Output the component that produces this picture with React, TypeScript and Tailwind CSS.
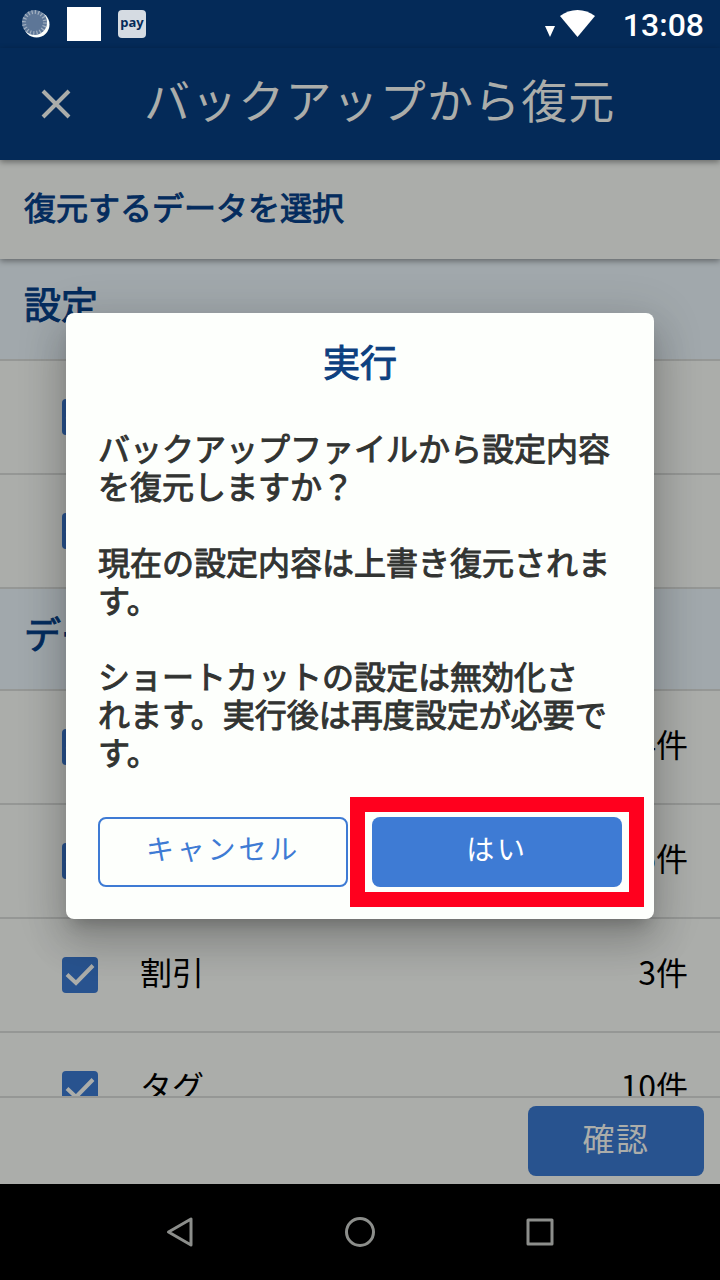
import { ReactNode } from 'react'

type Row = { name: string; label?: string; count?: string }

const settingRows: Row[] = [{ name: 'setting-1' }, { name: 'setting-2' }]

const dataRows: Row[] = [
	{ name: 'data-1', count: '4件' },
	{ name: 'data-2', count: '5件' },
	{ name: 'data-3', label: '割引', count: '3件' },
	{ name: 'data-4', label: 'タグ', count: '10件' },
]

const message = `バックアップファイルから設定内容
を復元しますか？

現在の設定内容は上書き復元されま
す。

ショートカットの設定は無効化さ
れます。実行後は再度設定が必要で
す。`

const StatusBar = () => (
	<div className="flex h-12 shrink-0 items-center bg-[#042a58] pl-5 pr-4">
		<svg width="32" height="32" viewBox="0 0 32 32" className="shrink-0">
			<circle cx="16.500" cy="16.500" r="13" fill="#fdfffc" />
			<circle cx="14.500" cy="14.500" r="12.500" fill="#5d7697" />
			<circle
				cx="14.500"
				cy="14.500"
				r="10.500"
				fill="none"
				stroke="#a3b1c1"
				strokeWidth="4"
				strokeDasharray="1.2 2.1"
			/>
		</svg>
		<div className="ml-[15px] size-[34px] bg-white" />
		<div className="ml-[17px] flex size-7 items-center justify-center rounded-sm bg-[#d5dbe2] pb-1 font-['Noto_Sans','Open_Sans',sans-serif] text-[13px] leading-5 font-bold text-[#042a58]">
			pay
		</div>
		<svg width="52" height="30" viewBox="0 0 52 30" className="ml-auto">
			<path d="M2 17h10l-5 11z" fill="#fff" />
			<path d="M17 7C27-1 42-1 52 7L34.500 28z" fill="#fff" />
		</svg>
		<span className="ml-7 pt-0.5 font-['Roboto',sans-serif] text-[32px] leading-12 font-medium text-white">
			13:08
		</span>
	</div>
)

const SectionTitle = ({ children }: { children: ReactNode }) => (
	<h2 className="flex h-[102px] items-center border-b-2 border-[#959795] bg-[#a1a8ac] px-6 pb-3 text-[37px] leading-12 text-[#042c5e] [-webkit-text-stroke:1px]">
		{children}
	</h2>
)

const CheckRow = ({ name, label, count }: Row) => (
	<label className="flex h-[114px] items-center border-b-2 border-[#959795] pl-[62px] pr-8 text-[32px] leading-12 text-black">
		<span className="relative size-9 shrink-0">
			<input
				type="checkbox"
				name={name}
				aria-label={label ?? name}
				defaultChecked
				className="block size-9 appearance-none rounded-sm bg-[#28538f]"
			/>
			<svg
				viewBox="0 0 36 36"
				className="pointer-events-none absolute inset-0 size-9"
			>
				<path
					d="M5 17.500L14 26L31 8.500"
					fill="none"
					stroke="#abadaa"
					strokeWidth="4"
				/>
			</svg>
		</span>
		<span className="ml-[42px] grow pb-2">{label}</span>
		<span className="pb-2">{count}</span>
	</label>
)

const Dialog = () => (
	<div
		role="dialog"
		aria-labelledby="dialog-title"
		className="w-full rounded-lg bg-[#fdfffc] px-8 pt-6 pb-8 shadow-[0_11px_15px_-7px_rgba(0,0,0,0.2),0_24px_38px_3px_rgba(0,0,0,0.14),0_9px_46px_8px_rgba(0,0,0,0.12)]"
	>
		<h2
			id="dialog-title"
			className="text-center text-[37px] leading-12 text-[#0d4080] [-webkit-text-stroke:1px]"
		>
			実行
		</h2>
		<p className="mt-[43px] text-[32px] leading-[38px] whitespace-pre text-[#323432] [-webkit-text-stroke:1px]">
			{message}
		</p>
		<div className="mt-[47px] grid grid-cols-2 gap-6">
			<button className="h-[70px] rounded-lg border-2 border-[#3e7bd4] pb-2 text-[28px] tracking-widest text-[#3e7bd4]">
				キャンセル
			</button>
			<div className="relative">
				<button className="h-[70px] w-full rounded-lg bg-[#3e7bd4] pb-2 text-[28px] tracking-widest text-white">
					はい
				</button>
				<div className="pointer-events-none absolute -inset-x-[22px] -inset-y-5 border-[15px] border-[#ff001e]" />
			</div>
		</div>
	</div>
)

const NavBar = () => (
	<nav className="flex h-24 shrink-0 items-center justify-center gap-[148px] bg-black">
		<button aria-label="戻る">
			<svg width="32" height="32" viewBox="0 0 32 32" className="block">
				<path
					d="M4.500 16L27 3v26z"
					fill="none"
					stroke="#8c8e8b"
					strokeWidth="3"
					strokeLinejoin="round"
				/>
			</svg>
		</button>
		<button aria-label="ホーム">
			<svg width="32" height="32" viewBox="0 0 32 32" className="block">
				<circle
					cx="16"
					cy="16"
					r="13.500"
					fill="none"
					stroke="#8c8e8b"
					strokeWidth="3"
				/>
			</svg>
		</button>
		<button aria-label="履歴">
			<svg width="32" height="32" viewBox="0 0 32 32" className="block">
				<rect
					x="4"
					y="4"
					width="24"
					height="24"
					fill="none"
					stroke="#8c8e8b"
					strokeWidth="3"
					strokeLinejoin="round"
				/>
			</svg>
		</button>
	</nav>
)

const App = () => {
	return (
		<div className="relative flex h-screen flex-col overflow-hidden bg-[#abadaa] font-['Noto_Sans_CJK_JP',sans-serif]">
			<StatusBar />
			<header className="relative z-10 flex h-28 shrink-0 items-center bg-[#042a58] px-10 text-[#abadaa] shadow-[0_2px_6px_rgba(0,0,0,0.4)]">
				<button aria-label="閉じる">
					<svg width="32" height="32" viewBox="0 0 32 32" className="block">
						<path d="M3 3l26 26M29 3L3 29" stroke="#abadaa" strokeWidth="4" />
					</svg>
				</button>
				<h1 className="ml-[72px] pb-3 text-[46px] leading-16 tracking-wide whitespace-nowrap">
					バックアップから復元
				</h1>
			</header>
			<div className="relative flex h-[99px] shrink-0 items-center px-6 pb-2 text-[32px] leading-12 text-[#042c5e] shadow-[0_2px_6px_rgba(0,0,0,0.4)] [-webkit-text-stroke:1px]">
				復元するデータを選択
			</div>
			<main className="min-h-0 flex-1 overflow-hidden">
				<SectionTitle>設定</SectionTitle>
				{settingRows.map((row) => (
					<CheckRow key={row.name} {...row} />
				))}
				<SectionTitle>データ</SectionTitle>
				{dataRows.map((row) => (
					<CheckRow key={row.name} {...row} />
				))}
			</main>
			<footer className="flex shrink-0 justify-end border-t-2 border-[#959795] px-4 py-2">
				<button className="h-[70px] w-44 rounded-lg bg-[#28538f] pb-2 text-[32px] tracking-wider text-[#abadaa]">
					確認
				</button>
			</footer>
			<NavBar />
			<div className="absolute inset-x-0 top-12 bottom-24 z-20 flex items-center px-[66px]">
				<Dialog />
			</div>
		</div>
	)
}

export default App
